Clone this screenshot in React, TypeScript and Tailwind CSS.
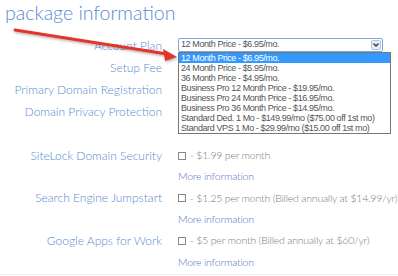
import { ReactNode } from "react";

const options = [
  "12 Month Price - $6.95/mo.",
  "24 Month Price - $5.95/mo.",
  "36 Month Price - $4.95/mo.",
  "Business Pro 12 Month Price - $19.95/mo.",
  "Business Pro 24 Month Price - $16.95/mo.",
  "Business Pro 36 Month Price - $14.95/mo.",
  "Standard Ded. 1 Mo - $149.99/mo ($75.00 off 1st mo)",
  "Standard VPS 1 Mo - $29.99/mo ($15.00 off 1st mo)",
];

function Row({ label, tight, children }: { label?: string; tight?: boolean; children?: ReactNode }) {
  return (
    <div className={`flex items-center ${tight ? "h-[21.4px]" : "h-[22px]"}`}>
      <div className="w-[162px] shrink-0 whitespace-nowrap text-right text-[12px] text-[#5a8bd2]">{label}</div>
      <div className="whitespace-nowrap pl-4 text-[10.5px] tracking-[-0.2px] text-[#7a7a7a]">{children}</div>
    </div>
  );
}

function Price({ text }: { text: string }) {
  return (
    <span className="flex items-center gap-[4px]">
      <span className="inline-block h-[8px] w-[8px] border border-[#888]" />
      <span>- {text}</span>
    </span>
  );
}

function MoreInfo() {
  return (
    <Row tight>
      <span className="text-[#5a6fc4]">More information</span>
    </Row>
  );
}

export default function App() {
  return (
    <div className="relative h-[276px] w-[398px] overflow-hidden bg-white font-['Lato',sans-serif] font-light">
      <h1 className="pl-[5px] pt-[1px] text-[19.5px] leading-[24px] text-[#5a8bd2]">package information</h1>

      <div className="mt-[10px] flex flex-col">
        <Row label="Account Plan" />
        <Row label="Setup Fee" />
        <Row label="Primary Domain Registration" />
        <Row label="Domain Privacy Protection" />
        <Row />
        <Row label="SiteLock Domain Security" tight>
          <Price text="$1.99 per month" />
        </Row>
        <MoreInfo />
        <Row label="Search Engine Jumpstart" tight>
          <Price text="$1.25 per month (Billed annually at $14.99/yr)" />
        </Row>
        <MoreInfo />
        <Row label="Google Apps for Work" tight>
          <Price text="$5 per month (Billed annually at $60/yr)" />
        </Row>
        <MoreInfo />
      </div>

      <div className="absolute bottom-[1px] left-0 h-px w-full bg-[#ececec]" />

      {/* select + open list */}
      <div className="absolute left-[178px] top-[38px] whitespace-nowrap font-['Liberation_Sans',sans-serif] text-[9px] font-normal tracking-[-0.4px] text-[#555]">
        <div className="flex h-[14px] w-[205px] items-center justify-between rounded-[2px] border border-[#7ea6d9] bg-white pl-[2px]">
          <span>12 Month Price - $6.95/mo.</span>
          <span className="mr-[1px] flex h-[10px] w-[10px] items-center justify-center rounded-[2px] border border-[#b5c7df] bg-[#e9eef6]">
            <svg width="6" height="4" viewBox="0 0 6 4">
              <path d="M0.5 0.5 L3 3 L5.5 0.5" fill="none" stroke="#333" strokeWidth="1.3" />
            </svg>
          </span>
        </div>
        <div className="w-[213px] border border-[#777] bg-white">
          {options.map((o, i) => (
            <div
              key={o}
              className={`h-[10px] pl-[2px] leading-[10px] ${i === 0 ? "bg-[#3399ff] text-white" : ""}`}
            >
              {o}
            </div>
          ))}
        </div>
      </div>

      {/* red annotation arrow */}
      <svg className="absolute left-0 top-0" width="398" height="276" viewBox="0 0 398 276">
        <defs>
          <filter id="sh" x="-10%" y="-50%" width="120%" height="200%">
            <feDropShadow dx="1" dy="1.5" stdDeviation="1" floodColor="#000" floodOpacity="0.3" />
          </filter>
        </defs>
        <g filter="url(#sh)">
          <line x1="15" y1="30" x2="167" y2="54" stroke="#e4352b" strokeWidth="3" strokeLinecap="round" />
          <path d="M177 57 L163 49 L165 61 Z" fill="#e4352b" />
        </g>
      </svg>
    </div>
  );
}
